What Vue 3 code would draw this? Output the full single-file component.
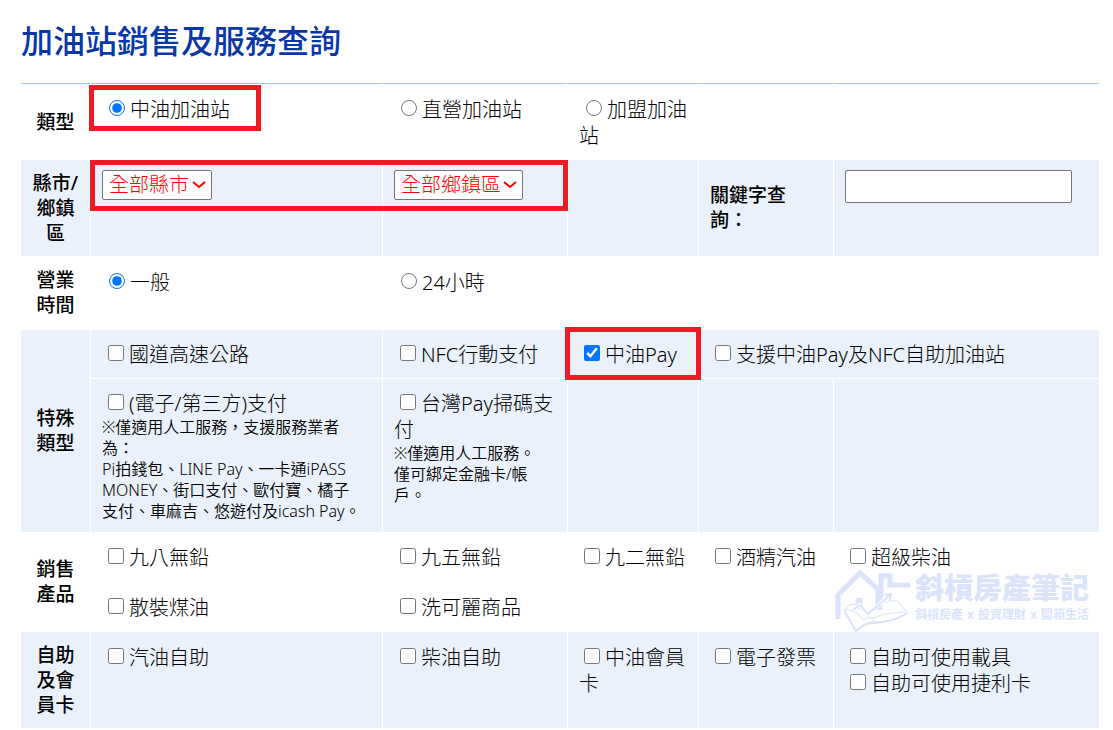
<script setup>
import { ref } from 'vue'

const stationType = ref('cpc')
const hours = ref('normal')
const cpcPay = ref(true)
const keyword = ref('')
</script>

<template>
  <main class="page">
    <h1>加油站銷售及服務查詢</h1>
    <table>
      <colgroup>
        <col class="c-head" />
        <col class="c-one" />
        <col class="c-two" />
        <col class="c-three" />
        <col class="c-four" />
        <col />
      </colgroup>
      <tbody>
        <tr class="first">
          <th scope="row">類型</th>
          <td>
            <label><input v-model="stationType" type="radio" name="type" value="cpc" />中油加油站</label>
            <span class="mark mark-type"></span>
          </td>
          <td><label><input v-model="stationType" type="radio" name="type" value="direct" />直營加油站</label></td>
          <td><label><input v-model="stationType" type="radio" name="type" value="franchise" />加盟加油站</label></td>
          <td></td>
          <td></td>
        </tr>
        <tr class="tint area">
          <th scope="row">縣市/<br />鄉鎮區</th>
          <td>
            <select aria-label="縣市" class="city"><option>全部縣市</option></select>
            <span class="mark mark-area"></span>
          </td>
          <td><select aria-label="鄉鎮區" class="town"><option>全部鄉鎮區</option></select></td>
          <td></td>
          <td class="key"><label for="keyword">關鍵字查詢：</label></td>
          <td><input id="keyword" v-model="keyword" class="text" type="text" /></td>
        </tr>
        <tr class="hours">
          <th scope="row">營業時間</th>
          <td><label><input v-model="hours" type="radio" name="hours" value="normal" />一般</label></td>
          <td><label><input v-model="hours" type="radio" name="hours" value="all" />24小時</label></td>
          <td></td>
          <td></td>
          <td></td>
        </tr>
        <tr class="tint special">
          <th scope="row" rowspan="2">特殊類型</th>
          <td><label><input type="checkbox" />國道高速公路</label></td>
          <td><label><input type="checkbox" />NFC行動支付</label></td>
          <td>
            <label><input v-model="cpcPay" type="checkbox" />中油Pay</label>
            <span class="mark mark-pay"></span>
          </td>
          <td colspan="2"><label><input type="checkbox" />支援中油Pay及NFC自助加油站</label></td>
        </tr>
        <tr class="tint payments">
          <td>
            <label><input type="checkbox" />(電子/第三方)支付</label>
            <p>※僅適用人工服務，支援服務業者<br />為：<br />Pi拍錢包、LINE Pay、一卡通iPASS<br />MONEY、街口支付、歐付寶、橘子<br />支付、車麻吉、悠遊付及icash Pay。</p>
          </td>
          <td>
            <label><input type="checkbox" />台灣Pay掃碼支付</label>
            <p>※僅適用人工服務。<br />僅可綁定金融卡/帳<br />戶。</p>
          </td>
          <td></td>
          <td></td>
          <td></td>
        </tr>
        <tr class="product">
          <th scope="row" rowspan="2">銷售產品</th>
          <td><label><input type="checkbox" />九八無鉛</label></td>
          <td><label><input type="checkbox" />九五無鉛</label></td>
          <td><label><input type="checkbox" />九二無鉛</label></td>
          <td><label><input type="checkbox" />酒精汽油</label></td>
          <td>
            <label><input type="checkbox" />超級柴油</label>
            <div class="watermark">
              <svg viewBox="0 0 78 66" width="78" height="66" fill="none" stroke="#dbe4fb">
                <path d="M4 52V28L26 6l21 19V9h9v9h20" stroke-width="5" />
                <path d="M17 37l-7 6 12 21c6-6 11-8 17-9 10 0 24-2 34-9L64 34c-6-1-10 0-14 2" fill="#fff" stroke-width="1" />
                <path d="M10 43c9 0 14 2 19 10 3-2 6-3 10-2 10-4 19-5 31-6M22 64c6-6 11-8 17-9 10 0 24-2 34-9M39 51v4M17 37c6 0 10 3 14 7" stroke-width="1" />
                <path d="M11 45l11 19c6-6 11-8 17-8 10 0 24-3 34-10" stroke-width="2" />
                <path d="M25 31v11" stroke-width="7" />
                <path d="M45 23v20" stroke-width="7" />
                <path d="M19 43l7-5 8 9 22-19" stroke="#fff" stroke-width="4" />
                <path d="M19 43l7-5 8 9 22-19M51 28l6-1-1 6" stroke-width="2" />
              </svg>
              <div class="brand">
                <strong>斜槓房產筆記</strong>
                <small><span>斜槓房產</span><span>x</span><span>投資理財</span><span>x</span><span>開箱生活</span></small>
              </div>
            </div>
          </td>
        </tr>
        <tr class="product">
          <td><label><input type="checkbox" />散裝煤油</label></td>
          <td><label><input type="checkbox" />洗可麗商品</label></td>
          <td></td>
          <td></td>
          <td></td>
        </tr>
        <tr class="tint self">
          <th scope="row">自助及會員卡</th>
          <td><label><input type="checkbox" />汽油自助</label></td>
          <td><label><input type="checkbox" />柴油自助</label></td>
          <td><label><input type="checkbox" />中油會員卡</label></td>
          <td><label><input type="checkbox" />電子發票</label></td>
          <td>
            <label><input type="checkbox" />自助可使用載具</label><br />
            <label><input type="checkbox" />自助可使用捷利卡</label>
          </td>
        </tr>
      </tbody>
    </table>
  </main>
</template>

<style>
body {
  background: #fff;
}
</style>

<style scoped>
.page {
  padding: 20px 14px 2px 21px;
  color: #000;
  font: 300 20px/26px "Noto Sans", "Noto Sans CJK TC", sans-serif;
}
h1 {
  margin: 0 0 21px;
  color: #0a37a8;
  font-size: 32px;
  font-weight: 500;
  line-height: 42px;
}
table {
  width: 100%;
  table-layout: fixed;
  border-spacing: 0;
}
.c-head { width: 69px; }
.c-one { width: 292px; }
.c-two { width: 185px; }
.c-three { width: 131px; }
.c-four { width: 135px; }
th {
  padding: 0 8px;
  font-size: 19px;
  font-weight: 500;
  line-height: 25px;
  text-align: center;
}
td {
  position: relative;
  padding: 13px 6px 0 11px;
  border-left: 1px solid #fff;
  vertical-align: top;
}
.first th,
.first td { border-top: 1px solid #9bc4e6; }
.tint { background: #eaf1fa; }
.first { height: 77px; }
.area, .self { height: 96px; }
.area td { padding-top: 10px; }
.area td.key {
  padding-top: 0;
  padding-right: 40px;
  font-size: 19px;
  font-weight: 500;
  line-height: 25px;
  vertical-align: middle;
}
.hours { height: 74px; }
.hours td { padding-top: 14px; }
.special { height: 49px; }
.special td {
  padding-top: 12px;
  border-bottom: 1px solid #fff;
}
.payments { height: 153px; }
.payments td { padding-top: 12px; }
.product { height: 50px; }
p {
  margin: 0;
  font-size: 16px;
  font-weight: 350;
  line-height: 21px;
}
input[type="radio"],
input[type="checkbox"] {
  width: 16px;
  height: 16px;
  margin: 0 5px;
  vertical-align: 1px;
}
td:nth-of-type(-n+2) input[type="checkbox"] {
  margin-left: 6px;
}
input[type="radio"] {
  margin-left: 7px;
}
select {
  display: block;
  height: 30px;
  padding: 0 6px;
  border: 1px solid #767676;
  border-radius: 2px;
  appearance: none;
  background: #fff url("data:image/svg+xml,%3Csvg xmlns='http://www.w3.org/2000/svg' width='14' height='8' fill='none' stroke='red' stroke-width='2'%3E%3Cpath d='M1 1l6 5 6-5'/%3E%3C/svg%3E") no-repeat right 5px center;
  color: #f00;
  font: inherit;
}
.city { width: 110px; }
.town { width: 129px; }
.text {
  display: block;
  box-sizing: border-box;
  width: 227px;
  max-width: 100%;
  height: 33px;
  border: 1px solid #767676;
  border-radius: 2px;
  background: #fff;
  font: inherit;
}
.mark {
  position: absolute;
  z-index: 1;
  box-sizing: border-box;
  border: 5px solid #ed1c24;
  pointer-events: none;
}
.mark-type { top: 1px; left: -2px; width: 172px; height: 46px; }
.mark-area { top: 0; left: -1px; width: calc(100% + 187px); height: 51px; }
.mark-pay { top: -3px; left: -3px; width: 136px; height: 53px; }
.watermark {
  position: absolute;
  z-index: 1;
  top: 35px;
  left: 0;
  display: flex;
  gap: 3px;
  color: #dbe4fb;
  white-space: nowrap;
  pointer-events: none;
}
.brand {
  display: flex;
  flex-direction: column;
  padding-top: 4px;
}
.brand strong {
  font-size: 29px;
  font-weight: 900;
  line-height: 34px;
}
.brand small {
  display: flex;
  gap: 4px;
  font-size: 12px;
  font-weight: 700;
  line-height: 20px;
}
</style>
